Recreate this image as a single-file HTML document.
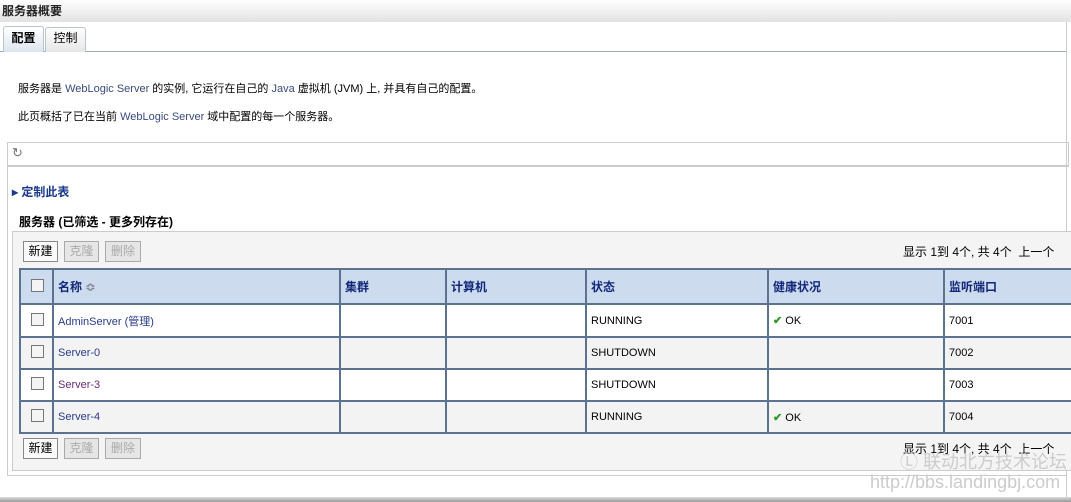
<!DOCTYPE html><html><head><meta charset="utf-8"><style>
body{margin:0;width:1071px;height:502px;position:relative;overflow:hidden;background:#fff;font-family:"Liberation Sans","Noto Sans CJK SC",sans-serif;font-size:12px;color:#000}
.a{position:absolute}
.btn{position:absolute;border:1px solid #aaa;background:#f0f0f0;font-size:12px;line-height:19px;text-align:center;box-sizing:border-box;height:21px}
.dis{color:#aaa;background:#e6e6e6}
table{position:absolute;left:19px;top:268px;border-collapse:collapse;width:1060px;table-layout:fixed}
td,th{border:2px solid #5b7290;height:30px;padding:0 4px;text-align:left;font-size:11px;box-sizing:border-box}
th{background:#cddbee;color:#12277a;font-weight:bold;font-size:12px;height:35px}
.cb{display:inline-block;width:11px;height:11px;border:1px solid #777;background:#f4f4f4;margin-left:6px}
a{color:#2a3c8a;text-decoration:none}
.ok{color:#2a9a20;font-weight:bold}
</style></head><body>
<div class="a" style="left:0;top:0;width:1071px;height:22px;background:linear-gradient(#fff,#e2e2e2)"></div>
<div class="a" style="left:2px;top:2px;font-weight:bold;font-size:12px;color:#222">服务器概要</div>
<div class="a" style="left:0;top:51px;width:1066px;height:1px;background:#9aacbc"></div>
<div class="a" style="left:3px;top:26px;width:39px;height:25px;border:1px solid #b8c4d0;border-bottom:none;background:linear-gradient(#fff,#dce6f0);border-radius:3px 3px 0 0;font-weight:bold;text-align:center;line-height:22px">配置</div>
<div class="a" style="left:45px;top:27px;width:39px;height:24px;border:1px solid #b8c4d0;border-bottom:none;background:linear-gradient(#fff,#e6e6e6);border-radius:3px 3px 0 0;text-align:center;line-height:20px">控制</div>
<div class="a" style="left:1066px;top:22px;width:1px;height:480px;background:#ccc"></div>
<div class="a" style="left:18px;top:80px;font-size:11px">服务器是 <span style="color:#3a4a80">WebLogic Server</span> 的实例, 它运行在自己的 <span style="color:#3a4a80">Java</span> 虚拟机 (JVM) 上, 并具有自己的配置。</div>
<div class="a" style="left:18px;top:108px;font-size:11px">此页概括了已在当前 <span style="color:#3a4a80">WebLogic Server</span> 域中配置的每一个服务器。</div>
<div class="a" style="left:7px;top:142px;width:1060px;height:22px;border:1px solid #ccc;border-bottom:2px solid #ccc"></div>
<div class="a" style="left:12px;top:145px;color:#777;font-size:13px">↻</div>
<div class="a" style="left:7px;top:166px;width:1px;height:310px;background:#ccc"></div>
<div class="a" style="left:7px;top:475px;width:1060px;height:1px;background:#ccc"></div>
<div class="a" style="left:12px;top:183px;color:#1a3a8a;font-weight:bold">▸ 定制此表</div>
<div class="a" style="left:19px;top:213px;font-weight:bold">服务器 (已筛选 - 更多列存在)</div>
<div class="a" style="left:12px;top:231px;width:1060px;height:238px;border:1px solid #ccc;background:#f4f4f4"></div>
<div class="btn" style="left:23px;top:241px;width:35px;background:#fafafa;border-color:#888">新建</div>
<div class="btn dis" style="left:64px;top:241px;width:35px">克隆</div>
<div class="btn dis" style="left:105px;top:241px;width:36px">删除</div>
<div class="a" style="left:903px;top:243px">显示 1到 4个, 共 4个 &nbsp;上一个</div>
<table>
<colgroup><col style="width:33px"><col style="width:287px"><col style="width:106px"><col style="width:140px"><col style="width:182px"><col style="width:176px"><col></colgroup>
<tr><th><span class="cb"></span></th><th>名称 <span style="color:#889">≎</span></th><th>集群</th><th>计算机</th><th>状态</th><th>健康状况</th><th>监听端口</th></tr>
<tr style="background:#fff;height:33px"><td><span class="cb"></span></td><td><a>AdminServer (管理)</a></td><td></td><td></td><td>RUNNING</td><td><span class="ok">✔</span> OK</td><td>7001</td></tr>
<tr style="background:#f3f3f3;height:32px"><td><span class="cb"></span></td><td><a>Server-0</a></td><td></td><td></td><td>SHUTDOWN</td><td></td><td>7002</td></tr>
<tr style="background:#fff;height:32px"><td><span class="cb"></span></td><td><a style="color:#6a2a7a">Server-3</a></td><td></td><td></td><td>SHUTDOWN</td><td></td><td>7003</td></tr>
<tr style="background:#f3f3f3;height:32px"><td><span class="cb"></span></td><td><a>Server-4</a></td><td></td><td></td><td>RUNNING</td><td><span class="ok">✔</span> OK</td><td>7004</td></tr>
</table>
<div class="btn" style="left:23px;top:438px;width:35px;background:#fafafa;border-color:#888">新建</div>
<div class="btn dis" style="left:64px;top:438px;width:35px">克隆</div>
<div class="btn dis" style="left:105px;top:438px;width:36px">删除</div>
<div class="a" style="left:903px;top:440px">显示 1到 4个, 共 4个 &nbsp;上一个</div>
<div class="a" style="left:900px;top:448px;color:#ccc;font-size:18px">Ⓛ 联动北方技术论坛</div>
<div class="a" style="left:870px;top:472px;color:#ccc;font-size:18px">http://bbs.landingbj.com</div>
<div class="a" style="left:0;top:497px;width:1071px;height:5px;background:linear-gradient(#ddd,#999)"></div>
</body></html>
